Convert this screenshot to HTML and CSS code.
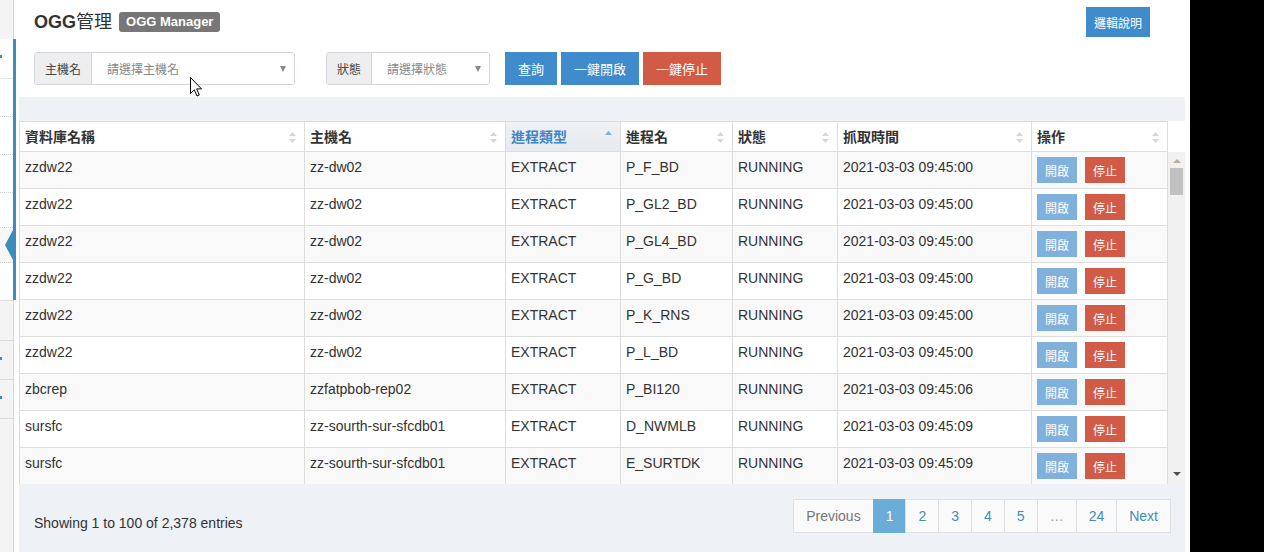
FILE: index.html
```html
<!DOCTYPE html>
<html lang="zh-Hant">
<head>
<meta charset="utf-8">
<title>OGG管理</title>
<link rel="stylesheet" href="styles.css">
</head>
<body>
<div class="app">
  <aside class="sidebar">
    <div class="sb-item sb-top"></div>
    <div class="sb-active">
      <div class="sb-sub sb-first"><i class="mark"></i></div>
      <div class="sb-sub sb-dot h38"></div>
      <div class="sb-sub sb-dot h38"></div>
      <div class="sb-sub sb-dot h38"></div>
      <div class="sb-sub sb-dot h35"></div>
      <div class="sb-sub sb-dot sb-hl h35"></div>
      <div class="sb-sub h37"></div>
    </div>
    <div class="sb-item sb-row sb-first-gray"></div>
    <div class="sb-item sb-row"><i class="mark"></i></div>
    <div class="sb-item sb-row"><i class="mark"></i></div>
    <div class="sb-item sb-rest"></div>
  </aside>

  <main class="main">
    <header class="topbar">
      <h1 class="title"><span class="title-en">OGG</span><span class="title-zh">管理</span><span class="badge">OGG Manager</span></h1>
      <button class="btn btn-help">邏輯說明</button>
    </header>

    <div class="filters">
      <div class="ig ig-host">
        <span class="ig-addon">主機名</span>
        <span class="ig-select">請選擇主機名<i class="caret"></i></span>
      </div>
      <div class="ig ig-state">
        <span class="ig-addon">狀態</span>
        <span class="ig-select">請選擇狀態<i class="caret"></i></span>
      </div>
      <div class="btn-row">
        <button class="btn btn-primary">查詢</button>
        <button class="btn btn-primary">一鍵開啟</button>
        <button class="btn btn-danger">一鍵停止</button>
      </div>
    </div>

    <section class="panel">
      <div class="dt-head">
        <table class="grid">
          <colgroup><col class="c1"><col class="c2"><col class="c3"><col class="c4"><col class="c5"><col class="c6"><col class="c7"></colgroup>
          <thead>
            <tr>
              <th><div class="th-in">資料庫名稱<svg class="sort" width="7" height="11" viewBox="0 0 7 11"><path d="M3.5 0L7 4H0z M0 7h7L3.5 11z"/></svg></div></th>
              <th><div class="th-in">主機名<svg class="sort" width="7" height="11" viewBox="0 0 7 11"><path d="M3.5 0L7 4H0z M0 7h7L3.5 11z"/></svg></div></th>
              <th class="sorted"><div class="th-in">進程類型<svg class="sort asc" width="7" height="11" viewBox="0 0 7 11"><path d="M3.5 0L7 4H0z"/></svg></div></th>
              <th><div class="th-in">進程名<svg class="sort" width="7" height="11" viewBox="0 0 7 11"><path d="M3.5 0L7 4H0z M0 7h7L3.5 11z"/></svg></div></th>
              <th><div class="th-in">狀態<svg class="sort" width="7" height="11" viewBox="0 0 7 11"><path d="M3.5 0L7 4H0z M0 7h7L3.5 11z"/></svg></div></th>
              <th><div class="th-in">抓取時間<svg class="sort" width="7" height="11" viewBox="0 0 7 11"><path d="M3.5 0L7 4H0z M0 7h7L3.5 11z"/></svg></div></th>
              <th><div class="th-in">操作<svg class="sort" width="7" height="11" viewBox="0 0 7 11"><path d="M3.5 0L7 4H0z M0 7h7L3.5 11z"/></svg></div></th>
            </tr>
          </thead>
        </table>
      </div>

      <div class="dt-body">
        <div class="dt-scroll">
          <table class="grid">
            <colgroup><col class="c1"><col class="c2"><col class="c3"><col class="c4"><col class="c5"><col class="c6"><col class="c7"></colgroup>
            <tbody>
              <tr><td>zzdw22</td><td>zz-dw02</td><td>EXTRACT</td><td>P_F_BD</td><td>RUNNING</td><td>2021-03-03 09:45:00</td><td><div class="acts"><button class="btn-sm btn-open">開啟</button><button class="btn-sm btn-stop">停止</button></div></td></tr>
              <tr><td>zzdw22</td><td>zz-dw02</td><td>EXTRACT</td><td>P_GL2_BD</td><td>RUNNING</td><td>2021-03-03 09:45:00</td><td><div class="acts"><button class="btn-sm btn-open">開啟</button><button class="btn-sm btn-stop">停止</button></div></td></tr>
              <tr><td>zzdw22</td><td>zz-dw02</td><td>EXTRACT</td><td>P_GL4_BD</td><td>RUNNING</td><td>2021-03-03 09:45:00</td><td><div class="acts"><button class="btn-sm btn-open">開啟</button><button class="btn-sm btn-stop">停止</button></div></td></tr>
              <tr><td>zzdw22</td><td>zz-dw02</td><td>EXTRACT</td><td>P_G_BD</td><td>RUNNING</td><td>2021-03-03 09:45:00</td><td><div class="acts"><button class="btn-sm btn-open">開啟</button><button class="btn-sm btn-stop">停止</button></div></td></tr>
              <tr><td>zzdw22</td><td>zz-dw02</td><td>EXTRACT</td><td>P_K_RNS</td><td>RUNNING</td><td>2021-03-03 09:45:00</td><td><div class="acts"><button class="btn-sm btn-open">開啟</button><button class="btn-sm btn-stop">停止</button></div></td></tr>
              <tr><td>zzdw22</td><td>zz-dw02</td><td>EXTRACT</td><td>P_L_BD</td><td>RUNNING</td><td>2021-03-03 09:45:00</td><td><div class="acts"><button class="btn-sm btn-open">開啟</button><button class="btn-sm btn-stop">停止</button></div></td></tr>
              <tr><td>zbcrep</td><td>zzfatpbob-rep02</td><td>EXTRACT</td><td>P_BI120</td><td>RUNNING</td><td>2021-03-03 09:45:06</td><td><div class="acts"><button class="btn-sm btn-open">開啟</button><button class="btn-sm btn-stop">停止</button></div></td></tr>
              <tr><td>sursfc</td><td>zz-sourth-sur-sfcdb01</td><td>EXTRACT</td><td>D_NWMLB</td><td>RUNNING</td><td>2021-03-03 09:45:09</td><td><div class="acts"><button class="btn-sm btn-open">開啟</button><button class="btn-sm btn-stop">停止</button></div></td></tr>
              <tr><td>sursfc</td><td>zz-sourth-sur-sfcdb01</td><td>EXTRACT</td><td>E_SURTDK</td><td>RUNNING</td><td>2021-03-03 09:45:09</td><td><div class="acts"><button class="btn-sm btn-open">開啟</button><button class="btn-sm btn-stop">停止</button></div></td></tr>
            </tbody>
          </table>
        </div>
        <div class="vscroll">
          <i class="vs-up"></i>
          <i class="vs-thumb"></i>
          <i class="vs-space"></i>
          <i class="vs-down"></i>
        </div>
      </div>

      <div class="dt-foot">
        <div class="info">Showing 1 to 100 of 2,378 entries</div>
        <ul class="pagination">
          <li class="pg-prev"><a>Previous</a></li>
          <li class="active"><a>1</a></li>
          <li><a>2</a></li>
          <li><a>3</a></li>
          <li><a>4</a></li>
          <li><a>5</a></li>
          <li class="pg-ellipsis"><a>…</a></li>
          <li><a>24</a></li>
          <li><a>Next</a></li>
        </ul>
      </div>
    </section>
  </main>

  <div class="offscreen"></div>

  <svg class="cursor" width="13" height="20" viewBox="0 0 13 20"><path d="M0.5 0.5 L0.5 16.5 L4.3 12.8 L7 19 L9.3 18 L6.7 11.9 L11.5 11.9 Z" fill="#fff" stroke="#000" stroke-width="1" stroke-linejoin="miter"/></svg>
</div>
</body>
</html>
```

FILE: styles.css
```css
* { box-sizing: border-box; }

body {
  margin: 0;
  font-family: "Liberation Sans", "Noto Sans CJK TC", sans-serif;
  font-size: 14px;
  color: #333;
  background: #000;
}

button { font-family: inherit; cursor: pointer; }

.app {
  position: relative;
  display: flex;
  width: 1264px;
  height: 552px;
  overflow: hidden;
}

/* ---------- sidebar edge ---------- */
.sidebar {
  width: 16px;
  flex: none;
  background: #fff;
  display: flex;
  flex-direction: column;
}
.sb-item {
  width: 14px;
  background: #f4f4f4;
  border-right: 1px solid #d2d6de;
}
.sb-top { height: 39px; }
.sb-active {
  width: 16px;
  border-right: 3px solid #3c8dbc;
  background: #fff;
}
.sb-sub { position: relative; }
.sb-first { height: 40px; border-bottom: 1px solid #e4e4e4; }
.sb-dot { border-bottom: 1px dotted #cfcfcf; }
.h38 { height: 38px; }
.h35 { height: 35px; }
.h37 { height: 37px; }
.sb-hl { background: #f7f7f7; }
.sb-hl::after {
  content: "";
  position: absolute;
  right: 0;
  top: 2px;
  border-right: 8px solid #3c8dbc;
  border-top: 15px solid transparent;
  border-bottom: 15px solid transparent;
}
.sb-row { height: 39px; border-bottom: 1px solid #dcdcdc; position: relative; }
.sb-first-gray { border-top: 1px solid #dcdcdc; height: 41px; }
.sb-rest { flex: 1; }
.mark {
  position: absolute;
  left: 0;
  top: 16px;
  width: 2px;
  height: 3px;
  background: #3c8dbc;
}

/* ---------- main ---------- */
.main {
  width: 1174px;
  flex: none;
  background: #fff;
  display: flex;
  flex-direction: column;
}
.topbar {
  height: 37px;
  padding: 7px 40px 0 18px;
  display: flex;
  align-items: center;
  justify-content: space-between;
}
.title {
  margin: 0;
  display: flex;
  align-items: center;
  font-size: 18px;
  line-height: 30px;
  color: #333;
}
.title-en { font-weight: bold; }
.title-zh { font-weight: normal; margin-right: 6px; }
.badge {
  background: #777;
  color: #fff;
  font-size: 13px;
  font-weight: bold;
  line-height: 16px;
  padding: 2px 7px;
  border-radius: 3px;
  margin-left: 1px;
}
.btn {
  border: 0;
  color: #fff;
  font-size: 13px;
  padding: 0 13px;
  height: 33px;
}
.btn-help {
  background: #3f8bcb;
  font-size: 12px;
  height: 30px;
  padding: 0 8px;
}
.btn-primary { background: #3f8bcb; }
.btn-danger { background: #d25b47; }

.filters {
  margin-top: 15px;
  padding-left: 18px;
  height: 33px;
  display: flex;
}
.ig {
  display: flex;
  height: 33px;
  border: 1px solid #d2d6de;
  border-radius: 3px;
  overflow: hidden;
  font-size: 12px;
}
.ig-host { width: 261px; }
.ig-state { width: 164px; margin-left: 31px; }
.ig-addon {
  display: flex;
  align-items: center;
  padding: 0 10px;
  background: #eee;
  border-right: 1px solid #d2d6de;
  color: #444;
}
.ig-select {
  flex: 1;
  display: flex;
  align-items: center;
  justify-content: space-between;
  padding: 0 8px 0 15px;
  color: #888;
  background: #fff;
}
.caret {
  width: 0;
  height: 0;
  border-left: 3px solid transparent;
  border-right: 3px solid transparent;
  border-top: 6px solid #888;
}
.btn-row {
  margin-left: 15px;
  display: flex;
  gap: 4px;
}

/* ---------- data panel ---------- */
.panel {
  flex: 1;
  margin: 12px 5px 0 3px;
  padding-top: 24px;
  background: #eef1f6;
  display: flex;
  flex-direction: column;
}
.dt-head { background: #fff; }

.grid {
  width: 1149px;
  table-layout: fixed;
  border-collapse: separate;
  border-spacing: 0;
}
.c1 { width: 285px; }
.c2 { width: 201px; }
.c3 { width: 115px; }
.c4 { width: 112px; }
.c5 { width: 105px; }
.c6 { width: 194px; }
.c7 { width: 137px; }

.grid th {
  height: 31px;
  padding: 5px 5px 4px 5px;
  border-top: 1px solid #ddd;
  border-bottom: 1px solid #ddd;
  border-left: 1px solid #ddd;
  text-align: left;
  font-weight: bold;
  line-height: 20px;
  background: #fff;
  color: #333;
}
.grid th:last-child,
.grid td:last-child { border-right: 1px solid #ddd; }
.th-in {
  display: flex;
  justify-content: space-between;
  align-items: center;
  padding-right: 3px;
}
.sort { fill: #d6d6d6; }
.sorted { background: linear-gradient(#f0f2f5, #e6e9ee) !important; color: #3b87c8 !important; }
.sorted .th-in { align-items: flex-start; }
.sort.asc { fill: #7ab0dc; margin-top: 4px; }

.dt-body {
  display: flex;
  height: 332px;
}
.dt-scroll {
  width: 1149px;
  overflow: hidden;
  background: #fff;
}
.grid td {
  height: 37px;
  padding: 5px;
  border-left: 1px solid #ddd;
  border-bottom: 1px solid #ddd;
  line-height: 20px;
  vertical-align: top;
  white-space: nowrap;
  background: #fff;
}
.grid tbody tr:nth-child(odd) td { background: #f9f9f9; }

.acts { display: flex; gap: 8px; }
.btn-sm {
  width: 40px;
  height: 26px;
  border: 0;
  padding: 0;
  color: #fff;
  font-size: 12px;
}
.btn-open { background: #80b1dc; }
.btn-stop { background: #d25b47; }

.vscroll {
  width: 17px;
  background: #f1f1f1;
  display: flex;
  flex-direction: column;
  align-items: center;
  padding-top: 7px;
  padding-bottom: 8px;
}
.vs-up {
  width: 0;
  height: 0;
  border-left: 4px solid transparent;
  border-right: 4px solid transparent;
  border-bottom: 4px solid #b7aca0;
}
.vs-thumb {
  margin-top: 5px;
  width: 13px;
  height: 27px;
  background: #c1c1c1;
}
.vs-space { flex: 1; }
.vs-down {
  width: 0;
  height: 0;
  border-left: 4px solid transparent;
  border-right: 4px solid transparent;
  border-top: 4px solid #505050;
}

.dt-foot {
  display: flex;
  justify-content: space-between;
  align-items: flex-start;
  padding: 0 14px 0 15px;
}
.info {
  margin-top: 29px;
  line-height: 20px;
  color: #333;
}
.pagination {
  margin: 15px 0 0;
  padding: 0;
  list-style: none;
  display: flex;
}
.pagination a {
  display: block;
  padding: 6px 12px;
  line-height: 20px;
  border: 1px solid #dde1e6;
  margin-left: -1px;
  background: #fafafa;
  color: #3c8dbc;
  text-decoration: none;
}
.pagination li:first-child a { margin-left: 0; }
.pg-prev a { color: #777; }
.pg-ellipsis a { color: #999; }
.pagination .active a {
  background: #6badd8;
  border-color: #6badd8;
  color: #fff;
}

.offscreen { flex: 1; background: #000; }

.cursor {
  position: absolute;
  left: 190px;
  top: 77px;
}
```
